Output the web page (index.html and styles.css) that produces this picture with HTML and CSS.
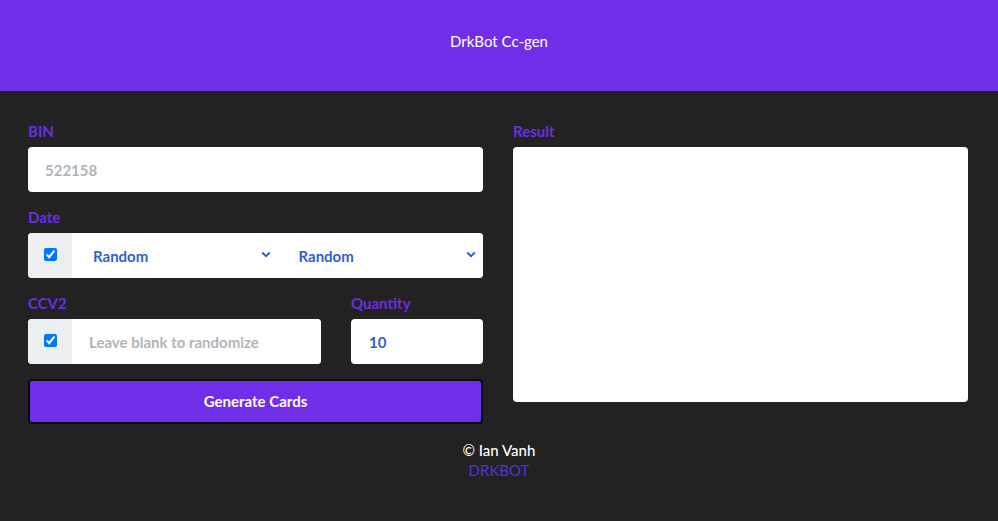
FILE: index.html
```html
<!DOCTYPE html>
<html lang="en">
<head>
<meta charset="utf-8">
<title>DrkBot Cc-gen</title>
<link rel="stylesheet" href="styles.css">
</head>
<body>
<header class="topbar">DrkBot Cc-gen</header>
<main class="main">
  <section class="col">
    <div class="field">
      <label class="label" for="bin">BIN</label>
      <input class="input" id="bin" type="text" placeholder="522158">
    </div>
    <div class="field">
      <label class="label">Date</label>
      <div class="group">
        <span class="addon"><input type="checkbox" checked></span>
        <div class="select-wrap">
          <select class="select"><option>Random</option></select>
          <svg class="chev" width="10" height="7" viewBox="0 0 10 7"><path d="M1.2 1.5 L5 5.2 L8.8 1.5" fill="none" stroke="#2f5fd6" stroke-width="2"/></svg>
        </div>
        <div class="select-wrap">
          <select class="select"><option>Random</option></select>
          <svg class="chev" width="10" height="7" viewBox="0 0 10 7"><path d="M1.2 1.5 L5 5.2 L8.8 1.5" fill="none" stroke="#2f5fd6" stroke-width="2"/></svg>
        </div>
      </div>
    </div>
    <div class="row">
      <div class="field ccv">
        <label class="label">CCV2</label>
        <div class="group">
          <span class="addon"><input type="checkbox" checked></span>
          <input class="input grow" type="text" placeholder="Leave blank to randomize">
        </div>
      </div>
      <div class="field qty">
        <label class="label">Quantity</label>
        <input class="input num" type="text" value="10">
      </div>
    </div>
    <button class="btn" type="button">Generate Cards</button>
  </section>
  <section class="col">
    <div class="field">
      <label class="label">Result</label>
      <textarea class="result"></textarea>
    </div>
  </section>
</main>
<footer class="footer">
  <div class="copy">© Ian Vanh</div>
  <a class="brand" href="#">DRKBOT</a>
</footer>
</body>
</html>
```

FILE: styles.css
```css
* { box-sizing: border-box; }
html, body { margin: 0; padding: 0; }
body {
  background: #222222;
  font-family: Lato, "Open Sans", "Liberation Sans", sans-serif;
  color: #fff;
  min-height: 521px;
}
.topbar {
  height: 91px;
  background: #712ee9;
  color: #fff;
  font-size: 15px;
  display: flex;
  align-items: center;
  justify-content: center;
  padding-bottom: 9px;
}
.main {
  display: flex;
  gap: 30px;
  padding: 31px 30px 0 28px;
}
.col { width: 455px; display: flex; flex-direction: column; }
.field { display: flex; flex-direction: column; margin-bottom: 16px; }
.label {
  color: #6c2de4;
  font-weight: 700;
  font-size: 15px;
  line-height: 19px;
  margin-bottom: 6px;
}
.input {
  height: 45px;
  border: none;
  border-radius: 4px;
  background: #fff;
  padding: 0 17px;
  font-family: inherit;
  font-size: 15px;
  font-weight: 700;
  color: #2f5fd6;
  outline: none;
}
.input::placeholder { color: #b0b5bb; }
.group {
  display: flex;
  height: 45px;
  background: #fff;
  border-radius: 4px;
  overflow: hidden;
}
.addon {
  width: 44px;
  flex: none;
  background: #eceff1;
  display: flex;
  align-items: center;
  justify-content: center;
  padding-bottom: 3px;
}
.addon input { margin: 0; width: 13px; height: 13px; }
.select-wrap { position: relative; flex: 1; display: flex; }
.select {
  flex: 1;
  appearance: none;
  -webkit-appearance: none;
  border: none;
  background: #fff;
  font-family: inherit;
  font-size: 15px;
  font-weight: 700;
  color: #2f5fd6;
  padding: 0 21px;
  outline: none;
}
.chev { position: absolute; right: 7px; top: 18px; pointer-events: none; }
.grow { flex: 1; min-width: 0; height: 45px; border-radius: 0; }
.row { display: flex; gap: 30px; margin-bottom: -1px; }
.ccv { width: 293px; }
.qty { width: 132px; }
.num { width: 132px; padding-left: 18px; }
.btn {
  height: 45px;
  width: 455px;
  background: #712ee9;
  border: 2px solid #0c0c0c;
  border-radius: 4px;
  color: #fff;
  font-family: inherit;
  font-size: 15px;
  font-weight: 700;
  padding: 0 0 2px;
}
.result {
  height: 255px;
  border: none;
  border-radius: 4px;
  background: #fff;
  resize: none;
  outline: none;
}
.footer {
  display: flex;
  flex-direction: column;
  align-items: center;
  margin-top: 16px;
  font-size: 15px;
  line-height: 20px;
}
.copy { color: #fff; font-weight: 500; }
.brand { color: #5a2fd9; text-decoration: none; }
```
